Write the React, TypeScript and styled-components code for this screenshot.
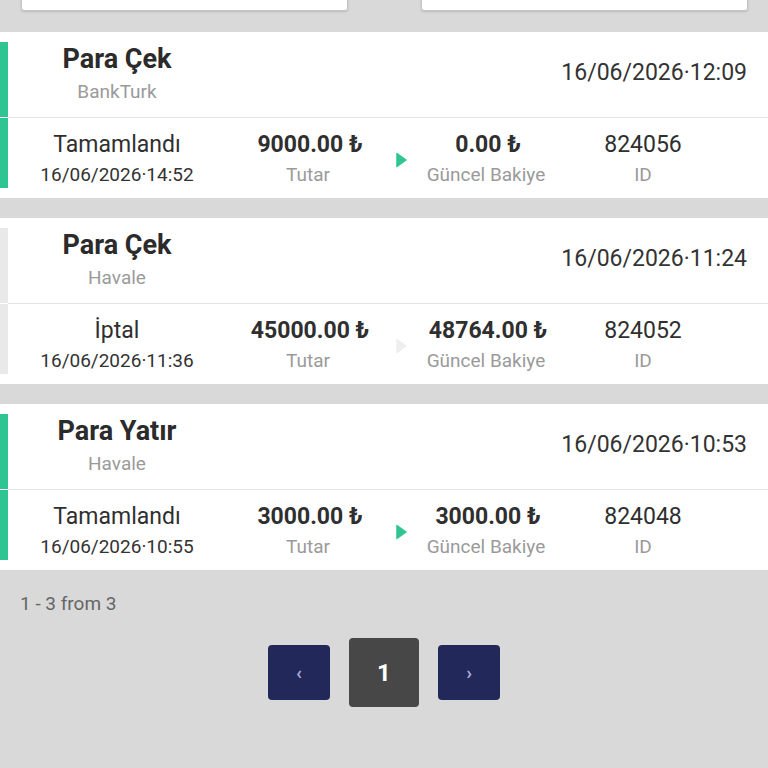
import React from "react";
import styled, { createGlobalStyle } from "styled-components";

const GlobalStyle = createGlobalStyle`
  html, body {
    margin: 0;
    padding: 0;
    background: #d9d9d9;
    font-family: Roboto, "Noto Sans", "Liberation Sans", sans-serif;
    color: #2b2b2b;
  }
  * {
    box-sizing: border-box;
  }
`;

const Page = styled.div`
  width: 768px;
  height: 768px;
  overflow: hidden;
`;

const FilterRow = styled.div`
  display: grid;
  grid-template-columns: 327px 327px;
  gap: 73px;
  padding: 0 20px 0 21px;
  margin-top: -29px;
  margin-bottom: 21px;
`;

const FilterInput = styled.div`
  height: 40px;
  background: #fff;
  border: 1px solid #c4c4c4;
  border-radius: 3px;
  box-shadow: 0 1px 2px rgba(0, 0, 0, 0.15);
`;

const CardList = styled.div`
  display: flex;
  flex-direction: column;
  gap: 20px;
`;

const Card = styled.div`
  background: #fff;
  display: flex;
  flex-direction: column;
`;

const Row = styled.div<{ $top?: boolean }>`
  display: flex;
  height: ${(p) => (p.$top ? "86px" : "80px")};
`;

const Bar = styled.div<{ $color: string; $top?: boolean }>`
  width: 8px;
  flex-shrink: 0;
  background: ${(p) => p.$color};
  margin-top: ${(p) => (p.$top ? "10px" : "0")};
  margin-bottom: ${(p) => (p.$top ? "1px" : "10px")};
`;

const HeadContent = styled.div`
  flex: 1;
  display: flex;
  align-items: center;
  border-bottom: 1px solid #e4e4e4;
`;

const TitleBlock = styled.div`
  width: 218px;
  text-align: center;
`;

const Title = styled.div`
  font-size: 27px;
  font-weight: 700;
  line-height: 34px;
  color: #2b2b2b;
`;

const Subtitle = styled.div`
  font-size: 19px;
  line-height: 32px;
  color: #9a9a9a;
`;

const HeadDate = styled.div`
  margin-left: auto;
  padding-right: 21px;
  margin-bottom: 5px;
  font-size: 23px;
  color: #333;
`;

const BodyContent = styled.div`
  flex: 1;
  display: grid;
  grid-template-columns: 218px 164px 22px 148px 166px;
  align-items: center;
  padding-top: 3px;
`;

const Cell = styled.div`
  text-align: center;
  white-space: nowrap;
`;

const Primary = styled.div<{ $bold?: boolean }>`
  font-size: 23px;
  font-weight: ${(p) => (p.$bold ? 700 : 400)};
  line-height: 30px;
  color: #2f2f2f;
  padding-left: ${(p) => (p.$bold ? "4px" : "0")};
`;

const Secondary = styled.div<{ $muted?: boolean }>`
  font-size: 19px;
  line-height: 30px;
  color: ${(p) => (p.$muted ? "#9a9a9a" : "#333")};
`;

const ArrowCell = styled.div`
  display: flex;
  justify-content: center;
  align-items: center;
`;

const Footer = styled.div`
  padding: 23px 20px 0;
  font-size: 19px;
  line-height: 22px;
  color: #666;
`;

const Pager = styled.div`
  display: flex;
  justify-content: center;
  align-items: center;
  gap: 19px;
  margin-top: 23px;
`;

const PageButton = styled.button<{ $active?: boolean }>`
  border: none;
  border-radius: 4px;
  padding: 0;
  width: ${(p) => (p.$active ? "70px" : "62px")};
  height: ${(p) => (p.$active ? "69px" : "55px")};
  background: ${(p) => (p.$active ? "#474747" : "#23285a")};
  color: ${(p) => (p.$active ? "#fff" : "#a7abd8")};
  font-family: Roboto, sans-serif;
  font-size: ${(p) => (p.$active ? "24px" : "19px")};
  font-weight: 700;
  display: flex;
  align-items: center;
  justify-content: center;
`;

interface Tx {
  title: string;
  method: string;
  created: string;
  status: string;
  updated: string;
  amount: string;
  balance: string;
  id: string;
  ok: boolean;
}

const transactions: Tx[] = [
  {
    title: "Para Çek",
    method: "BankTurk",
    created: "16/06/2026·12:09",
    status: "Tamamlandı",
    updated: "16/06/2026·14:52",
    amount: "9000.00 ₺",
    balance: "0.00 ₺",
    id: "824056",
    ok: true,
  },
  {
    title: "Para Çek",
    method: "Havale",
    created: "16/06/2026·11:24",
    status: "İptal",
    updated: "16/06/2026·11:36",
    amount: "45000.00 ₺",
    balance: "48764.00 ₺",
    id: "824052",
    ok: false,
  },
  {
    title: "Para Yatır",
    method: "Havale",
    created: "16/06/2026·10:53",
    status: "Tamamlandı",
    updated: "16/06/2026·10:55",
    amount: "3000.00 ₺",
    balance: "3000.00 ₺",
    id: "824048",
    ok: true,
  },
];

const Arrow: React.FC<{ color: string }> = ({ color }) => (
  <svg width="11" height="16" viewBox="0 0 11 16">
    <path d="M1 1.5 L10 8 L1 14.5 Z" fill={color} stroke={color} strokeWidth="1.5" strokeLinejoin="round" />
  </svg>
);

const TransactionCard: React.FC<{ tx: Tx }> = ({ tx }) => {
  const accent = tx.ok ? "#2fc592" : "#e9e9e9";
  return (
    <Card>
      <Row $top>
        <Bar $color={accent} $top />
        <HeadContent>
          <TitleBlock>
            <Title>{tx.title}</Title>
            <Subtitle>{tx.method}</Subtitle>
          </TitleBlock>
          <HeadDate>{tx.created}</HeadDate>
        </HeadContent>
      </Row>
      <Row>
        <Bar $color={accent} />
        <BodyContent>
          <Cell>
            <Primary>{tx.status}</Primary>
            <Secondary>{tx.updated}</Secondary>
          </Cell>
          <Cell>
            <Primary $bold>{tx.amount}</Primary>
            <Secondary $muted>Tutar</Secondary>
          </Cell>
          <ArrowCell>
            <Arrow color={tx.ok ? "#2fc592" : "#eeeeee"} />
          </ArrowCell>
          <Cell>
            <Primary $bold>{tx.balance}</Primary>
            <Secondary $muted>Güncel Bakiye</Secondary>
          </Cell>
          <Cell>
            <Primary>{tx.id}</Primary>
            <Secondary $muted>ID</Secondary>
          </Cell>
        </BodyContent>
      </Row>
    </Card>
  );
};

export default function App() {
  return (
    <Page>
      <GlobalStyle />
      <FilterRow>
        <FilterInput />
        <FilterInput />
      </FilterRow>
      <CardList>
        {transactions.map((tx) => (
          <TransactionCard key={tx.id} tx={tx} />
        ))}
      </CardList>
      <Footer>1 - 3 from 3</Footer>
      <Pager>
        <PageButton>‹</PageButton>
        <PageButton $active>1</PageButton>
        <PageButton>›</PageButton>
      </Pager>
    </Page>
  );
}
